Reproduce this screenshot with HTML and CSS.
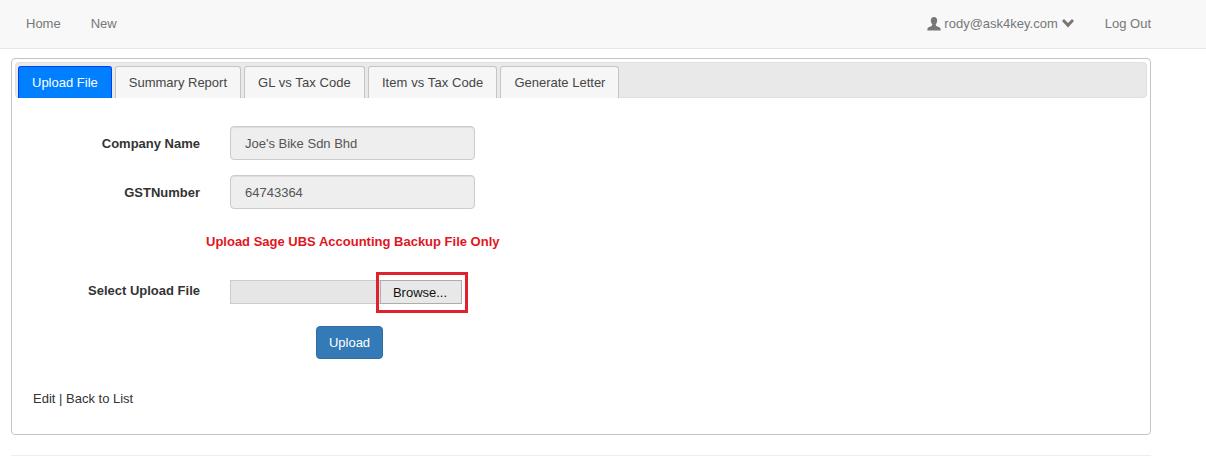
FILE: index.html
```html
<!DOCTYPE html>
<html lang="en">
<head>
  <meta charset="UTF-8">
  <meta name="viewport" content="width=device-width, initial-scale=1.0">
  <title>Upload File</title>
  <link rel="stylesheet" href="styles.css">
</head>
<body>
  <nav class="navbar">
    <div class="nav-left">
      <a class="nav-link" href="#">Home</a>
      <a class="nav-link" href="#">New</a>
    </div>
    <div class="nav-right">
      <a class="nav-user" href="#">
        <svg class="icon-user" width="14" height="14" viewBox="0 0 14 14"><path d="M7 0C5 0 3.800 1.500 3.800 3.500C3.800 5 4.400 6.300 5.200 7.100C5.300 7.900 5.200 8.500 4.600 8.900C3.400 9.600 1 10 .6 11.200C.4 11.900 .4 12.500 .4 13.500H13.600C13.600 12.500 13.600 11.900 13.400 11.200C13 10 10.600 9.600 9.400 8.900C8.800 8.500 8.700 7.900 8.800 7.100C9.600 6.300 10.200 5 10.200 3.500C10.200 1.500 9 0 7 0Z"/></svg>
        <span>rody@ask4key.com</span>
        <svg class="icon-chevron" width="12" height="9" viewBox="0 0 12 9"><path d="M2 0L6 4L10 0L12 2L6 8.500L0 2Z"/></svg>
      </a>
      <a class="nav-logout" href="#">Log Out</a>
    </div>
  </nav>

  <div class="container">
    <div class="panel">
      <ul class="tabs">
        <li class="tab active">Upload File</li>
        <li class="tab">Summary Report</li>
        <li class="tab tab-wide">GL vs Tax Code</li>
        <li class="tab tab-wide">Item vs Tax Code</li>
        <li class="tab">Generate Letter</li>
      </ul>

      <form class="form">
        <div class="form-row">
          <label class="form-label">Company Name</label>
          <input class="form-input" type="text" value="Joe's Bike Sdn Bhd" readonly>
        </div>
        <div class="form-row">
          <label class="form-label">GSTNumber</label>
          <input class="form-input" type="text" value="64743364" readonly>
        </div>
        <p class="notice">Upload Sage UBS Accounting Backup File Only</p>
        <div class="form-row file-row">
          <label class="form-label">Select Upload File</label>
          <div class="file-field">
            <button class="browse-button" type="button">Browse...</button>
            <span class="highlight"></span>
          </div>
        </div>
        <button class="upload-button" type="button">Upload</button>
      </form>

      <p class="links"><a href="#">Edit</a> | <a href="#">Back to List</a></p>
    </div>
    <hr class="divider">
  </div>
</body>
</html>
```

FILE: styles.css
```css
* {
  box-sizing: border-box;
}

body {
  margin: 0;
  background: #fff;
  color: #333;
  font-family: "Liberation Sans", Arial, sans-serif;
  font-size: 13px;
  line-height: 20px;
}

a {
  color: inherit;
  text-decoration: none;
}

.navbar {
  display: flex;
  justify-content: space-between;
  align-items: center;
  height: 49px;
  padding: 0 55px 0 26px;
  background: #f8f8f8;
  border-bottom: 1px solid #e7e7e7;
  color: #777;
}

.nav-left {
  display: flex;
  gap: 30px;
}

.nav-right {
  display: flex;
  align-items: center;
}

.nav-user {
  display: flex;
  align-items: center;
}

.icon-user {
  fill: #777;
  margin-right: 3px;
}

.icon-chevron {
  fill: #777;
  margin: -2px 0 0 4px;
}

.nav-logout {
  margin-left: 31px;
}

.container {
  width: 1140px;
  margin-left: 11px;
  padding-top: 9px;
}

.panel {
  height: 377px;
  padding: 3px;
  border: 1px solid #c4c4c4;
  border-radius: 4px;
}

.tabs {
  display: flex;
  gap: 3px;
  height: 36px;
  margin: 0;
  padding: 3px 0 0 2px;
  list-style: none;
  background: #e9e9e9;
  border: 1px solid #e0e0e0;
  border-radius: 4px;
}

.tab {
  height: 32px;
  padding: 6px 13px 0;
  background: #f6f6f6;
  border: 1px solid #c5c5c5;
  border-bottom: 0;
  border-radius: 3px 3px 0 0;
  color: #454545;
}

.tab-wide {
  letter-spacing: .08px;
}

.tab.active {
  background: #007fff;
  border-color: #003eff;
  color: #fff;
}

.form {
  padding-top: 28px;
}

.form-row {
  display: grid;
  grid-template-columns: 185px 245px;
  column-gap: 30px;
  margin-bottom: 15px;
}

.form-label {
  padding-top: 8px;
  font-weight: bold;
  text-align: right;
}

.form-input {
  height: 34px;
  padding: 6px 14px;
  background: #eee;
  border: 1px solid #ccc;
  border-radius: 4px;
  box-shadow: inset 0 1px 1px rgba(0, 0, 0, .075);
  color: #555;
  font: inherit;
}

.notice {
  margin: 23px 0 28px 191px;
  color: #e0151d;
  font-weight: bold;
}

.file-row {
  margin-bottom: 22px;
}

.file-row .form-label {
  padding-top: 1px;
}

.file-field {
  position: relative;
  display: flex;
  justify-content: flex-end;
  align-items: center;
  width: 232px;
  height: 24px;
  background: #e6e6e6;
  border: 1px solid #ccc;
}

.browse-button {
  width: 82px;
  height: 24px;
  margin-right: -1px;
  padding: 1px 2px 0 0;
  background: #e8e8e8;
  border: 1px solid #adadad;
  color: #111;
  font: inherit;
}

.highlight {
  position: absolute;
  top: -9px;
  right: -7px;
  width: 92px;
  height: 41px;
  border: 3px solid #e0222e;
}

.upload-button {
  display: block;
  width: 67px;
  height: 33px;
  margin-left: 301px;
  padding: 0;
  background: #337ab7;
  border: 1px solid #2e6da4;
  border-radius: 4px;
  color: #fff;
  font: inherit;
}

.links {
  margin: 30px 0 0 18px;
}

.divider {
  height: 1px;
  margin: 20px 0 0;
  background: #eee;
  border: 0;
}
```
